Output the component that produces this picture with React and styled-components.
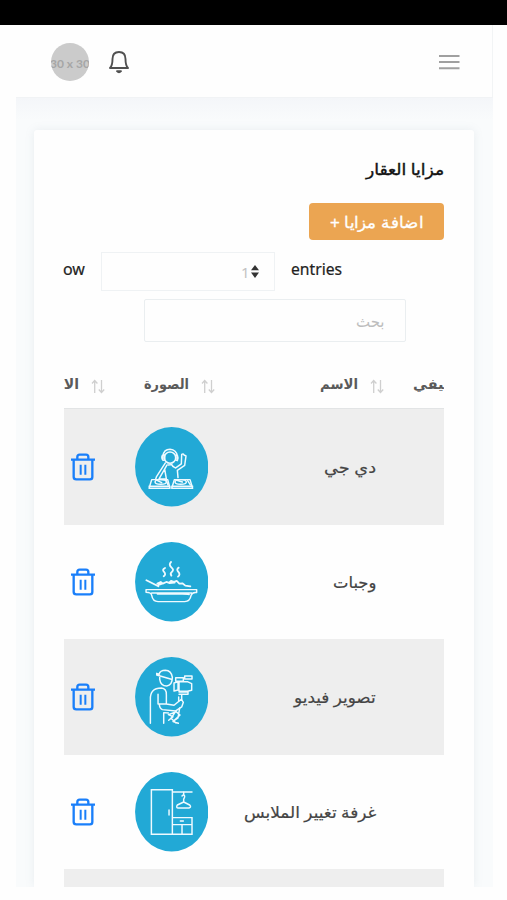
import React, { useLayoutEffect, useRef, useState } from "react";
import styled, { createGlobalStyle } from "styled-components";

const Global = createGlobalStyle`
  * { box-sizing: border-box; }
  body {
    margin: 0;
    background: #fefefe;
    font-family: "Noto Sans", "DejaVu Sans", sans-serif;
    overflow: hidden;
  }
`;

const Page = styled.div`
  width: 507px;
  height: 900px;
  overflow: hidden;
  background: #fefefe;
`;
const StatusBar = styled.div`
  height: 25px;
  background: #000;
`;
const Shell = styled.div`
  width: 477px;
  height: 862px;
  margin-left: 16px;
  display: flex;
  flex-direction: column;
  overflow: hidden;
`;
const Header = styled.header`
  height: 73px;
  flex: none;
  display: flex;
  align-items: center;
  padding: 1px 32px 0 35px;
  background: #fefefe;
  border-right: 1px solid #f2f4f5;
  border-bottom: 1px solid #f1f3f5;
`;
const Avatar = styled.div`
  width: 38px;
  height: 38px;
  border-radius: 50%;
  background: #cbcbcb;
  color: #a6a6a6;
  display: flex;
  align-items: center;
  justify-content: center;
  overflow: hidden;
  white-space: nowrap;
  font: 700 12px "Lato", sans-serif;
  padding-top: 3px;
`;
const BellIcon = styled.svg`
  width: 22px;
  height: 24px;
  margin-left: 19px;
`;
const MenuIcon = styled.svg`
  width: 22px;
  height: 16px;
  margin-left: auto;
`;
const Content = styled.main`
  flex: 1;
  min-height: 0;
  padding: 32px 19px 0 18px;
  background: linear-gradient(#f4f6f9, #f9fbfc 22px);
`;
const Card = styled.section`
  height: 100%;
  padding: 27px 30px 0;
  background: #fefefe;
  border-radius: 3px 3px 0 0;
  box-shadow: 0 0 10px rgba(120, 150, 165, 0.13);
  display: flex;
  flex-direction: column;
`;

const FitBox = styled.span`
  display: flex;
  justify-content: ${(p) => (p.$ltr ? "flex-start" : "flex-end")};
  flex: none;
  width: ${(p) => p.$w}px;
  height: 24px;
  line-height: 24px;
  font-size: ${(p) => p.$size || 16}px;
  font-weight: ${(p) => p.$weight || 400};
  color: ${(p) => p.$color || "#444"};
  -webkit-text-stroke: ${(p) => p.$stroke || 0}px currentColor;
  white-space: nowrap;
`;
const FitInner = styled.span`
  flex: none;
  transform-origin: ${(p) => (p.$ltr ? "left" : "right")} center;
`;
/* Condenses a label horizontally to the width of its slot. */
function Label({ w, size, weight, color, stroke, ltr, children }) {
  const ref = useRef(null);
  const [scale, setScale] = useState(1);
  useLayoutEffect(() => {
    setScale(w / ref.current.offsetWidth);
  }, [w]);
  return (
    <FitBox $w={w} $size={size} $weight={weight} $color={color} $stroke={stroke} $ltr={ltr}>
      <FitInner ref={ref} $ltr={ltr} dir={ltr ? "ltr" : "rtl"} style={{ transform: `scaleX(${scale})` }}>
        {children}
      </FitInner>
    </FitBox>
  );
}

const TitleRow = styled.div`
  display: flex;
  justify-content: flex-end;
  height: 46px;
`;
const AddButton = styled.button`
  align-self: flex-end;
  flex: none;
  width: 135px;
  height: 37px;
  padding: 3px 21px 0;
  display: flex;
  align-items: center;
  border: 0;
  border-radius: 4px;
  background: #eba552;
`;
const LengthRow = styled.div`
  display: flex;
  align-items: flex-start;
  flex: none;
  height: 39px;
  margin: 12px 0 0 -1px;
`;
const RowText = styled.div`
  padding-top: 5px;
`;
const SelectBox = styled.div`
  width: 174px;
  height: 39px;
  margin: 0 15.5px 0 16px;
  border: 1.5px solid #eff2f4;
  display: flex;
  align-items: center;
  justify-content: flex-end;
  padding-right: 14px;
  gap: 2px;
`;
const Digit = styled.span`
  font-size: 15px;
  color: #c3c3c3;
  width: 7px;
`;
const SelectArrows = styled.svg`
  width: 10px;
  height: 13px;
`;
const SearchBox = styled.div`
  flex: none;
  width: 262px;
  height: 43px;
  margin: 8px 0 0 80px;
  padding: 0 21px 0 0;
  border: 1.5px solid #eaeef0;
  border-radius: 2px;
  display: flex;
  align-items: center;
  justify-content: flex-end;
`;
const Table = styled.div`
  flex: 1;
  min-height: 0;
  margin-top: 18px;
  overflow: hidden;
`;
const HeadRow = styled.div`
  height: 49px;
  padding-bottom: 1px;
  display: grid;
  grid-template-columns: 41px 110px 169px 60px;
  align-items: center;
  border-bottom: 1px solid #e2e4e5;
`;
const HeadCell = styled.div`
  display: flex;
  align-items: center;
  justify-content: flex-end;
  gap: 12px;
`;
const SortIcon = styled.svg`
  width: 14px;
  height: 15px;
  margin-top: 6px;
`;
const Row = styled.div`
  height: ${(p) => (p.$shaded ? 116 : 114)}px;
  display: grid;
  grid-template-columns: 38px 139px 135px 68px;
  align-items: center;
  justify-items: center;
  background: ${(p) => (p.$shaded ? "#eeeeee" : "#fefefe")};
`;
const NameCell = styled.div`
  justify-self: end;
`;
const TrashIcon = styled.svg`
  width: 26px;
  height: 28px;
`;
const Picture = styled.svg`
  width: 73.4px;
  height: 79.6px;
  display: block;
`;

const Sort = () => (
  <SortIcon viewBox="0 0 14 15" fill="none" stroke="#cfcfcf" strokeWidth="1.3">
    <path d="M3.7 14V1.5M1 4.5l2.7-3 2.7 3M10.5 1v12.5M7.8 10.5l2.7 3 2.7-3" />
  </SortIcon>
);
const Trash = () => (
  <TrashIcon viewBox="45 115 78 84" fill="none" stroke="#1a7ffa" strokeWidth="7" strokeLinejoin="round">
    <path d="M48 135H120M56 136V187Q56 194 64 194H105Q112 194 112 187V136M67 134V127Q67 120 74 120H93Q100 120 100 127V134" />
    <path d="M77 150V180M91 150V180" strokeWidth="6" />
  </TrashIcon>
);

const Art = ({ children }) => (
  <Picture viewBox="240 37 220 239" fill="none" stroke="#effaff" strokeWidth="4.4" strokeLinejoin="round" strokeLinecap="round">
    <ellipse cx="350" cy="156.5" rx="110" ry="119.5" fill="#22a9d6" stroke="none" />
    {children}
  </Picture>
);
const DjArt = () => (
  <Art>
    <circle cx="345" cy="129" r="17" />
    <path d="M324 132V124Q326 104 345 104Q364 106 367 124V132M322 122Q318 130 324 137L329 136V121ZM367 121Q371 130 367 138L362 136V122Z" />
    <path d="M331 145L304 187 302 193M336 151L312 193H334L329 164M340 151L350 150Q353 158 362 160L379 148 380 119Q385 116 387 121L393 124 389 152 367 167 369 189" />
    <path d="M290 195H338L345 221H282ZM358 195H405L413 221H350ZM282 215H345M350 215H413" />
    <ellipse cx="317" cy="202" rx="17" ry="7" />
    <ellipse cx="377" cy="202" rx="17" ry="7" />
    <path d="M303 196L320 204M363 196L382 202M334 198L339 211M398 198L406 211" />
  </Art>
);
const MealArt = () => (
  <Art>
    <path d="M273 180H425V189Q411 187 408 198Q405 215 389 216H309Q293 215 290 197Q288 188 273 188ZM290 190H410M307 193Q409 193 402 195" />
    <path d="M274 152L310 170M307 162L317 157 323 162 334 157 342 160 348 154 357 157 365 154 373 162 382 161 391 168 406 170M311 166L321 162M343 160L359 159" strokeWidth="5.5" />
    <path d="M330 115Q320 120 327 127T326 140M348 97Q340 105 349 113T351 126T349 138M371 114Q363 119 370 127T369 141" strokeWidth="5.5" />
  </Art>
);
const CameraArt = () => (
  <Art>
    <path d="M314 92V104Q317 124 335 124Q352 122 352 98Q349 78 331 77Q315 77 312 89M312 89L305 86V91L349 104" />
    <path d="M286 236V165Q284 130 319 130Q335 131 334 151V178H309V149M334 178L357 182 379 164 385 173 380 187 362 199 322 195Q313 191 313 179M326 205V236M326 204L340 205" />
    <path d="M362 99H385V110H362ZM389 94H411V103H389ZM357 115L369 111V136L357 139ZM372 111H397L410 117V137L397 140H372ZM372 142H399V149H372M380 150V166M371 157V170" />
    <path d="M362 202L340 210 354 216 341 227M362 200L348 221 363 235M363 201L375 211 354 231 370 236M374 190L369 220 357 228" />
  </Art>
);
const WardrobeArt = () => (
  <Art>
    <path d="M289 90H352V224H289ZM352 97H411M352 174H411V224H352M352 195H411M381 195V224M342 151V166M376 184H385" strokeLinejoin="miter" />
    <path d="M381 109Q386 103 389 109Q389 115 386 118V127L367 136Q362 145 370 145H402Q410 143 404 136L386 127M386 98V104" />
  </Art>
);

const rows = [
  { name: "دي جي", w: 52, Art: DjArt },
  { name: "وجبات", w: 43, Art: MealArt },
  { name: "تصوير فيديو", w: 82, Art: CameraArt },
  { name: "غرفة تغيير الملابس", w: 132, Art: WardrobeArt },
];

export default function App() {
  return (
    <Page>
      <Global />
      <StatusBar />
      <Shell>
        <Header>
          <Avatar>30 x 30</Avatar>
          <BellIcon viewBox="0 0 22 24" fill="none" stroke="#505050" strokeWidth="1.9" strokeLinejoin="round">
            <path d="M2 18Q4.5 15.5 4.5 9Q4.5 2 11 2T17.5 9Q17.5 15.5 20 18Z" />
            <path d="M9 21.2Q11 23.3 13 21.2Z" fill="#505050" />
          </BellIcon>
          <MenuIcon viewBox="0 0 22 16" stroke="#a0a0a0" strokeWidth="2">
            <path d="M1 2H21.5M1 8H21.5M1 14.2H21.5" />
          </MenuIcon>
        </Header>
        <Content>
          <Card>
            <TitleRow>
              <Label w={78} size={16} color="#111" stroke={0.4}>مزايا العقار</Label>
            </TitleRow>
            <AddButton>
              <Label w={93} size={16} color="#fff" stroke={0.3}>اضافة مزايا +</Label>
            </AddButton>
            <LengthRow>
              <RowText>
                <Label w={22} size={16} color="#222" stroke={0.2} ltr>ow</Label>
              </RowText>
              <SelectBox>
                <Digit>1</Digit>
                <SelectArrows viewBox="0 0 10 13" fill="#333">
                  <path d="M5 0L9 5.2H1ZM5 13L1 7.5H9Z" />
                </SelectArrows>
              </SelectBox>
              <RowText>
                <Label w={51} size={16} color="#222" stroke={0.2} ltr>entries</Label>
              </RowText>
            </LengthRow>
            <SearchBox>
              <Label w={29} size={16} color="#bdbdbd">بحث</Label>
            </SearchBox>
            <Table>
              <HeadRow>
                <HeadCell>
                  <Label w={15} size={14} color="#5a5a5a" weight={700}>الا</Label>
                  <Sort />
                </HeadCell>
                <HeadCell>
                  <Label w={45} size={14} color="#5a5a5a" weight={700}>الصورة</Label>
                  <Sort />
                </HeadCell>
                <HeadCell>
                  <Label w={38} size={14} color="#5a5a5a" weight={700}>الاسم</Label>
                  <Sort />
                </HeadCell>
                <HeadCell>
                  <Label w={31} size={14} color="#5a5a5a" weight={700}>{"\u200Dيفي"}</Label>
                </HeadCell>
              </HeadRow>
              {rows.map(({ name, w, Art: RowArt }, i) => (
                <Row key={name} $shaded={i % 2 === 0}>
                  <Trash />
                  <RowArt />
                  <NameCell>
                    <Label w={w} size={16} color="#444" stroke={0.2}>{name}</Label>
                  </NameCell>
                </Row>
              ))}
              <Row $shaded />
            </Table>
          </Card>
        </Content>
      </Shell>
    </Page>
  );
}
